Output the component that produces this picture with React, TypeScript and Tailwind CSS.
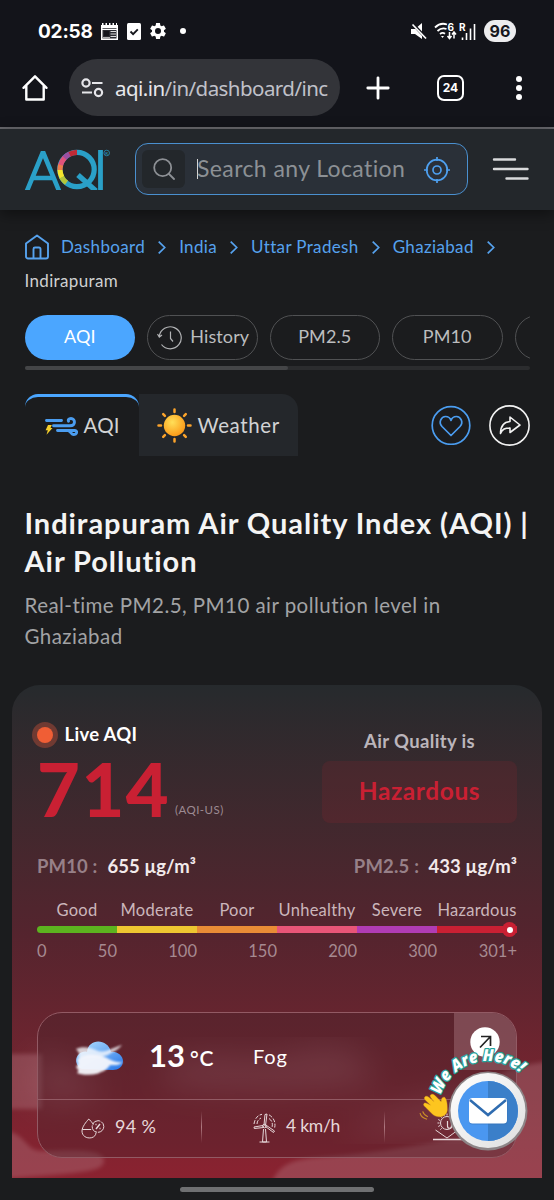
import { ReactNode } from "react";

const crumbs = ["Dashboard", "India", "Uttar Pradesh", "Ghaziabad"];

const levels = [
  { name: "Good", color: "bg-[#5cb31f]", mark: "50" },
  { name: "Moderate", color: "bg-[#edc631]", mark: "100" },
  { name: "Poor", color: "bg-[#e98c36]", mark: "150" },
  { name: "Unhealthy", color: "bg-[#e85577]", mark: "200" },
  { name: "Severe", color: "bg-[#b03cb4]", mark: "300" },
  { name: "Hazardous", color: "bg-[#c92033]", mark: "301+" },
];

function StatusBar() {
  return (
    <div className="flex h-[59px] items-center pt-[3px] pr-[38px] pl-[38px] text-white">
      <span className="w-[63px] font-[Inter] text-[19px] leading-none font-bold tracking-[-0.2px]">02:58</span>
      <svg className="h-[17px] w-[17px]" viewBox="0 0 17 17">
        <path d="M0 2h1V0h1.500v2h2V0H6v2h2V0h1.500v2h2V0H13v2h2V0h1v2h1v15H0z" fill="#fff" />
        <path d="M1.500 5h14v.8h-14zM1.500 7h14v8.500h-14z" fill="#2a2b31" />
        <path d="M3 8h5v5H3z" fill="#15161c" />
        <path d="M9.500 8.500H15M9.500 11H15M9.500 13.500H15M2 14.800h7" stroke="#ddd" strokeWidth="1.100" />
      </svg>
      <svg className="ml-[9px] h-[17px] w-[14px]" viewBox="0 0 14 17">
        <rect width="14" height="17" rx="1.500" fill="#fff" />
        <path d="M3.500 8.500l2.600 2.600 4.700-4.800" fill="none" stroke="#15161c" strokeWidth="1.900" />
      </svg>
      <svg className="ml-[7px] h-[20px] w-[20px]" viewBox="0 0 24 24" fill="#fff">
        <path d="M19.140 12.940c.04-.3.06-.61.06-.94 0-.32-.02-.64-.07-.94l2.030-1.580c.18-.14.23-.41.12-.61l-1.920-3.320c-.12-.22-.37-.29-.59-.22l-2.390.96c-.5-.38-1.030-.7-1.620-.94l-.36-2.540c-.04-.24-.24-.41-.48-.41h-3.840c-.24 0-.43.17-.47.41l-.36 2.540c-.59.24-1.130.57-1.620.94l-2.390-.96c-.22-.08-.47 0-.59.22L2.740 8.870c-.12.21-.08.47.12.61l2.030 1.580c-.05.3-.09.63-.09.94s.02.64.07.94l-2.030 1.580c-.18.14-.23.41-.12.61l1.920 3.320c.12.22.37.29.59.22l2.390-.96c.5.38 1.030.7 1.620.94l.36 2.540c.05.24.24.41.48.41h3.840c.24 0 .44-.17.47-.41l.36-2.540c.59-.24 1.130-.56 1.620-.94l2.390.96c.22.08.47 0 .59-.22l1.920-3.320c.12-.22.07-.47-.12-.61zM12 15.600a3.600 3.600 0 110-7.200 3.600 3.600 0 010 7.200z" />
      </svg>
      <span className="ml-[12px] h-[6px] w-[6px] rounded-full bg-white" />
      <svg className="ml-auto h-[17px] w-[16px]" viewBox="0 0 16 17">
        <path d="M0 6h4l7-6v16l-7-5H0z" fill="#fff" />
        <path d="M1 0l15 16" stroke="#15161c" strokeWidth="3" />
        <path d="M1.500 1.500L15 15.500" stroke="#fff" strokeWidth="1.700" />
      </svg>
      <svg className="ml-[7px] h-[18px] w-[24px] overflow-visible" viewBox="0 0 24 18" fill="none" stroke="#fff">
        <path d="M1 5.500C5 1.500 9 1 13 2.500M3.500 9C6.500 6.200 9.500 5.800 12.500 7M6 12c1.700-1.400 3.500-1.400 5-.2" strokeWidth="1.800" />
        <path d="M7 14h3l-1.500 2z" fill="#fff" stroke="none" />
        <path d="M15.500 10v6m-2-2l2 2.500 2-2.500M20 16.500v-6m-2 2l2-2.500 2 2.500" strokeWidth="1.500" />
        <text x="13.500" y="8.500" fill="#fff" stroke="none" fontSize="10" fontWeight="700" fontFamily="Inter">6</text>
      </svg>
      <svg className="ml-[2px] h-[17px] w-[16px] overflow-visible" viewBox="0 0 16 17">
        <text x="-1" y="8" fill="#fff" fontSize="10" fontWeight="700" fontFamily="Inter">R</text>
        <path d="M2.500 14.500V17M6.500 10v7M10.500 5.500V17M14.500 1v16" stroke="#fff" strokeWidth="1.600" />
      </svg>
      <span className="ml-[8px] flex h-[22px] w-[32px] items-center justify-center rounded-full bg-[#ececee] font-[Inter] text-[16px] font-bold text-[#15161c]">96</span>
    </div>
  );
}

function BrowserBar() {
  return (
    <div className="flex h-[68px] items-start">
      <svg className="mt-[15px] ml-[21px] h-[28px] w-[28px]" viewBox="0 0 28 28" fill="none" stroke="#fff" strokeWidth="2.400" strokeLinejoin="round">
        <path d="M2.500 13.800L14 2.300l11.500 11.500M5.300 11.500V25.500h17.400V11.500" strokeLinecap="round" />
      </svg>
      <div className="ml-[20px] flex h-[57px] w-[271px] items-center rounded-full bg-[#333439] pl-[12px]">
        <svg className="h-[20px] w-[23px] shrink-0" viewBox="0 0 23 20" fill="none" stroke="#e6e6ea" strokeWidth="2.200">
          <circle cx="5" cy="5" r="3.600" />
          <circle cx="17.500" cy="14.500" r="3.600" />
          <path d="M11 5h10.500M1 14.500h10" />
        </svg>
        <span className="ml-[11px] font-['Noto_Sans'] text-[20.500px] leading-[30px] tracking-[-0.550px] whitespace-nowrap text-[#c0c1c9]">
          <span className="text-[#e8e8ec]">aqi.in</span>/in/dashboard/inc
        </span>
      </div>
      <svg className="mt-[17px] ml-[26px] h-[24px] w-[24px]" viewBox="0 0 24 24" stroke="#fff" strokeWidth="2.800" strokeLinecap="round">
        <path d="M12 1.800v20.400M1.800 12h20.400" />
      </svg>
      <div className="mt-[16px] ml-[47px] flex h-[26px] w-[27px] items-center justify-center rounded-[7px] border-[2.500px] border-white font-[Inter] text-[12px] font-bold text-white">24</div>
      <div className="mt-[17px] ml-[52px] flex flex-col gap-[3px]">
        <i className="h-[6px] w-[6px] rounded-full bg-white" />
        <i className="h-[6px] w-[6px] rounded-full bg-white" />
        <i className="h-[6px] w-[6px] rounded-full bg-white" />
      </div>
    </div>
  );
}

function Logo() {
  return (
    <svg className="h-[41px] w-[86px]" viewBox="0 0 86 41" fill="none" strokeWidth="5.200">
      <g stroke="#2aa0c8">
        <path d="M2.500 43L19 3l16.500 40M9.500 29h19" strokeWidth="4.600" strokeLinejoin="bevel" />
        <path d="M76.500 1v40" strokeWidth="4.800" />
        <circle cx="53" cy="20.500" r="17.200" />
        <path d="M54 26l18 16" />
      </g>
      <path d="M45 5.500a17 17 0 018-2.200" stroke="#c02a35" />
      <path d="M40 9.500a17 17 0 015.500-4.300" stroke="#9b4fa0" />
      <path d="M36.500 16.500a17 17 0 014-7.500" stroke="#e0527a" />
      <path d="M36 21a17 17 0 01.7-5" stroke="#ef7b4a" />
      <path d="M38 28.500a17 17 0 01-2-7.500" stroke="#f5e52c" />
      <path d="M42.500 33.700a17 17 0 01-4.800-5.500" stroke="#b4c63a" />
      <circle cx="82.700" cy="4" r="2.800" stroke="#2aa0c8" strokeWidth=".7" />
      <text x="81.300" y="5.700" fontSize="4.500" fill="#2aa0c8" fontFamily="Lato">R</text>
    </svg>
  );
}

function Header() {
  return (
    <header className="flex h-[81px] items-start bg-[#23272b] pt-[14px] pr-[25px] pl-[24px] shadow-[0_4px_14px_rgba(0,0,0,0.45)]">
      <div className="mt-[6px]">
        <Logo />
      </div>
      <div className="ml-[25px] flex h-[52px] w-[333px] items-center rounded-[13px] border-[1.500px] border-[#4a90d0] bg-[#2a3038] pl-[6px]">
        <span className="flex h-[38px] w-[43px] items-center justify-center rounded-[6px] bg-[#23272b]">
          <svg className="h-[22px] w-[22px]" viewBox="0 0 22 22" fill="none" stroke="#8d9095" strokeWidth="1.800" strokeLinecap="round">
            <circle cx="9.700" cy="9.700" r="8.500" />
            <path d="M16 16l5 5" />
          </svg>
        </span>
        <span className="ml-[12px] h-[20px] w-px bg-[#d5d5d5]" />
        <span className="mb-[2px] ml-[-1px] w-[227px] text-[23px] tracking-[0.4px] whitespace-nowrap text-[#8c9095]">Search any Location</span>
        <svg className="mt-[1px] h-[26px] w-[26px]" viewBox="0 0 26 26" fill="none" stroke="#4e9fee" strokeWidth="1.700">
          <circle cx="13" cy="13" r="10.300" />
          <circle cx="13" cy="13" r="4" />
          <path d="M13 0v4M13 22v4M0 13h4M22 13h4" />
        </svg>
      </div>
      <svg className="mt-[14px] ml-auto h-[24px] w-[37px]" viewBox="0 0 37 24" stroke="#d9dadc" strokeWidth="2.400" strokeLinecap="round">
        <path d="M2 2.500h21M2 12h33.500M14.500 21.500h21" />
      </svg>
    </header>
  );
}

function Breadcrumbs() {
  return (
    <nav className="flex h-[68px] flex-wrap items-center text-[17px] leading-[34px] tracking-[0.350px] text-[#56a2ee]">
      <svg className="mr-[12.500px] h-[26px] w-[24px]" viewBox="0 0 24 26" fill="none" stroke="#56a2ee" strokeWidth="1.900" strokeLinejoin="round">
        <path d="M1 9.500L12 1.500l11 8V22.500a2 2 0 01-2 2H3a2 2 0 01-2-2zM8.500 24.500V15a1.500 1.500 0 011.500-1.500h4a1.500 1.500 0 011.500 1.500v9.500" />
      </svg>
      {crumbs.map((c) => (
        <span key={c} className="flex h-[34px] items-center">
          {c}
          <svg className="mr-[13px] ml-[13px] h-[13px] w-[8px]" viewBox="0 0 8 13" fill="none" stroke="#56a2ee" strokeWidth="1.700">
            <path d="M.7.7l6 5.800-6 5.800" />
          </svg>
        </span>
      ))}
      <span className="w-full text-[#cfd0d1]">Indirapuram</span>
    </nav>
  );
}

function Pill({ active, children }: { active?: boolean; children?: ReactNode }) {
  return (
    <div className={`flex h-[45px] w-[110.500px] shrink-0 items-center justify-center rounded-full pb-[2px] text-[18px] tracking-[0.1px] ${active ? "bg-[#4ba6ff] text-white" : "border border-[#505153] text-[#bcbdbf]"}`}>
      {children}
    </div>
  );
}

function Filters() {
  return (
    <div className="mt-[17px]">
      <div className="flex gap-[12px] overflow-hidden">
        <Pill active>AQI</Pill>
        <Pill>
          <svg className="mt-[2px] mr-[8px] ml-[2px] h-[24px] w-[25px]" viewBox="0 0 25 24" fill="none" stroke="#b2b3b5" strokeWidth="1.200">
            <path d="M2.300 10.500A11 11 0 1 1 4.500 18.500M.5 8l1.800 3L5 9M13.500 5.500v7l2.500 3" />
          </svg>
          History
        </Pill>
        <Pill>PM2.5</Pill>
        <Pill>PM10</Pill>
        <Pill />
      </div>
      <div className="mt-[6px] h-[4px] rounded-full bg-[#2b2c2e]">
        <div className="h-[4px] w-[263px] rounded-full bg-[#444547]" />
      </div>
    </div>
  );
}

function Tabs() {
  return (
    <div className="mt-[24px] flex h-[62px] text-[20.500px] text-[#d2d3d5]">
      <div className="flex w-[114px] items-center rounded-t-[13px] border-t-[3px] border-[#4ba6ff] pl-[20px]">
        <svg className="mr-[6px] h-[19px] w-[33px]" viewBox="0 0 33 19" fill="none" stroke="#4b9df0" strokeWidth="2.900" strokeLinecap="round">
          <path d="M1.500 3.500h15M8.500 8.800H25c6 0 5.500-7.300 1-7.300-2.500 0-3 1.500-2.500 2.700M12.500 13.500h17c3.500 0 2.500 4-1 4-2 0-2-2-4.500-3.500" />
          <path d="M3 8h3.800L5.500 11h2L1.500 17.800l1.300-4.600H.6z" fill="#f6cf2b" stroke="none" />
        </svg>
        <span className="mb-[2px] tracking-[0.2px]">AQI</span>
      </div>
      <div className="flex w-[159px] items-center rounded-tr-[16px] bg-[#24272b] pl-[18px]">
        <svg className="mt-[1px] mr-[6px] h-[35px] w-[35px]" viewBox="0 0 35 35">
          <defs>
            <radialGradient id="sun" cx="40%" cy="35%" r="65%">
              <stop offset="0" stopColor="#ffdf58" />
              <stop offset="1" stopColor="#fb9b19" />
            </radialGradient>
          </defs>
          <circle cx="17.500" cy="17.500" r="10.700" fill="url(#sun)" />
          <path d="M17.500 1.500v2.500M17.500 31v2.500M1.500 17.500H4M31 17.500h2.500M6.200 6.200l1.700 1.700M27.100 27.100l1.700 1.700M28.800 6.200l-1.700 1.700M6.200 28.800l1.700-1.700" stroke="#fba32b" strokeWidth="2.500" strokeLinecap="round" />
        </svg>
        <span className="tracking-[0.6px]">Weather</span>
      </div>
      <svg className="mt-[11px] ml-auto h-[40px] w-[40px]" viewBox="0 0 40 40" fill="none" stroke="#4b9df0" strokeWidth="1.700">
        <circle cx="20" cy="20.500" r="18.800" />
        <path d="M20 30.500L11 21.500c-4-4.500-.5-10 3.500-10 2.700 0 4.700 1.500 5.500 4 .8-2.500 2.800-4 5.500-4 4 0 7.500 5.500 3.500 10z" strokeLinejoin="round" />
      </svg>
      <svg className="mt-[11px] ml-[18px] h-[41px] w-[41px]" viewBox="0 0 41 41" fill="none" stroke="#f2f2f2" strokeWidth="1.600">
        <circle cx="20.500" cy="20.500" r="19.600" />
        <path d="M11.500 28.500c0-8 3.500-11.500 9.500-12v-4.500l10 8-10 7.500v-4.500c-5 0-7.500 1-9.500 5.500z" strokeLinejoin="round" />
      </svg>
    </div>
  );
}

function Clouds() {
  return (
    <svg className="absolute inset-0 h-full w-full" viewBox="0 0 530 493" preserveAspectRatio="none">
      <defs>
        <filter id="haze"><feGaussianBlur stdDeviation="2" /></filter>
        <filter id="wide"><feGaussianBlur stdDeviation="16" /></filter>
      </defs>
      <g fill="#b47882" opacity=".38" filter="url(#haze)">
        <path d="M-10 369H30V424H-10z" />
        <path d="M-10 446c24 0 22 20 40 20 25 0 62-4 62 10 0 12-30 12-102 18z" />
        <path d="M260 498c6-18 20-24 50-26 60-4 110-14 170-26V394q22-14 60-18v122z" />
      </g>
      <g fill="#b47882" opacity=".34" filter="url(#wide)">
        <path d="M25 370c30 0 40 20 60 28 20 20-30 20-60 20zM150 385c40-30 80 0 140-20 50-12 70 10 70 34-40 6-150 12-210 0zM330 450c40-30 80-30 130-46v40z" />
      </g>
    </svg>
  );
}

function WeatherBox() {
  return (
    <div className="relative mt-[48px] h-[146px] overflow-hidden rounded-[25px] border border-[#925a64] bg-[#46212b]/35 text-[#f1e8e9]">
      <div className="flex h-[87px] items-center border-b border-[#925a64] pl-[36px]">
        <svg className="mt-[4px] h-[38px] w-[52px]" viewBox="0 0 52 38">
          <defs>
            <linearGradient id="sky" x1="0" y1="0" x2="1" y2="1">
              <stop offset="0" stopColor="#b7e2ff" />
              <stop offset="1" stopColor="#2475e8" />
            </linearGradient>
            <filter id="soft"><feGaussianBlur stdDeviation="1.200" /></filter>
          </defs>
          <path d="M8 30a9 9 0 01-3-15c2-2 6-3 8-2C14-1 34-1 37 13c6-1 12 4 12 9 0 6-5 9-10 9z" fill="url(#sky)" />
          <g filter="url(#soft)" fill="#f6f7fc">
            <path d="M2 10c6-3 14-2 22 2 8 2 16-4 24-6-5 6-10 7-14 10-8 3-14 2-20 2-4 0-8 2-10 0 3-3 0-5-2-8z" opacity=".8" />
            <path d="M3 21c8-7 20-6 30-2 4 2 8 5 16 4-4 4-9 3-13 3-2 3-5 6-9 7-4 3-18 4-24 1 3-3 0-4-1-6 3-3 3-4 1-7z" opacity=".95" />
          </g>
        </svg>
        <span className="mb-[2px] ml-[23px] w-[41px] text-[31px] leading-none font-bold text-white">13</span>
        <span className="mt-[3px] w-[63px] text-[21px] font-semibold tracking-[0.8px] text-white">°C</span>
        <span className="mb-[1px] text-[20px] tracking-[0.9px] text-white">Fog</span>
        <div className="ml-auto flex h-[57px] w-[62px] items-center justify-center self-start bg-[#a87880]/45">
          <svg className="h-[30px] w-[30px]" viewBox="0 0 30 30">
            <circle cx="15" cy="15" r="14.700" fill="#fff" />
            <path d="M10 20.500L20 10M11 9.500h9.500V19" fill="none" stroke="#222" strokeWidth="1.700" />
          </svg>
        </div>
      </div>
      <div className="flex h-[54px] items-center text-[18px] text-[#e6d7d9]">
        <svg className="mt-[3px] ml-[43px] h-[21px] w-[24px]" viewBox="0 0 24 21" fill="none" stroke="#e6d7d9" strokeWidth="1">
          <path d="M12.500 6.500C11 4.500 9 2 7.800 1 5 4 1 9 1 13c0 9 14 9 14 1.500M1.200 11.500h9" />
          <circle cx="17" cy="8.500" r="5.800" strokeDasharray="9 1" />
          <path d="M15 11l4-5M14.500 6.500h1M18.500 10.500h1" strokeWidth="1.500" />
        </svg>
        <span className="mb-[1px] ml-[10px] w-[86px] tracking-[0.3px]">94 %</span>
        <span className="h-[32px] w-px bg-gradient-to-b from-transparent via-[#b07a82] to-transparent" />
        <svg className="mt-[2px] ml-[51px] h-[30px] w-[23px]" viewBox="0 0 23 30" fill="none" stroke="#e6d7d9" strokeWidth="1">
          <path d="M10.500 16l-1 13h4l-1-13M6.500 29h10M11 12l1-10.500 2-.5-1.500 11.500zM10 12.500L1 14l.3 1.500 9.200-1zM12.500 13.500l8 6 1-1.500-8-5.500z" />
          <circle cx="11.500" cy="13" r="1.800" />
          <path d="M1 11C2 5 5 2 9 1.300M4 11c0-3 2-5 4-6M16 1.800c5 3 7 8 5.500 13.500M16 5.500c3 2 4 5 3 9" strokeDasharray="4 1.500" />
        </svg>
        <span className="mb-[1px] ml-[10px] w-[98px] text-[17.500px] tracking-[-0.250px]">4 km/h</span>
        <span className="h-[32px] w-px bg-gradient-to-b from-transparent via-[#b07a82] to-transparent" />
        <svg className="ml-[48px] h-[30px] w-[32px] shrink-0" viewBox="0 0 32 30" fill="none" stroke="#e6d7d9" strokeWidth="1">
          <circle cx="14" cy="11" r="6.500" />
          <path d="M14 1.500v2M7.300 4.300l1.400 1.400M4.500 11h2M7.300 17.700l1.400-1.400M5.300 7.500l1.700 1M5.300 14.500l1.700-1M10.500 2l.8 1.800M20.700 4.300l-1.400 1.400M2.500 18L14 26l11-8" />
          <path d="M0 27.500h32" strokeWidth="1.600" />
          <path d="M14.500 9v5c0 3 4 3 4 0V9" strokeWidth="1.200" />
        </svg>
      </div>
    </div>
  );
}

function AqiCard() {
  return (
    <section className="relative mx-[12px] mt-[33px] h-[493px] shrink-0 overflow-hidden rounded-t-[28px] bg-gradient-to-b from-[#262a2d] via-[#54242e] via-[50%] to-[#8a2230]">
      <Clouds />
      <div className="relative px-[25px] pt-[37px]">
        <div className="flex h-[101px] justify-between">
          <div>
            <div className="-ml-[5px] flex h-[26px] items-center text-[18.500px] font-bold tracking-[0.3px] text-white">
              <span className="mr-[6.500px] flex h-[26px] w-[26px] items-center justify-center rounded-full bg-[#703a32]">
                <i className="h-[16px] w-[16px] rounded-full bg-[#f05e35]" />
              </span>
              Live AQI
            </div>
            <div className="-mt-px flex items-end text-[#c92033]">
              <span className="w-[138px] text-[74px] leading-[84px] font-black tracking-[1.500px]">714</span>
              <span className="mb-[16px] text-[11.500px] leading-none tracking-[0.450px] text-[#9d8b93]">(AQI-US)</span>
            </div>
          </div>
          <div className="w-[195px] pt-[6px] text-center">
            <div className="text-[18.500px] leading-[26px] font-bold tracking-[0.350px] text-[#bbb5bb]">Air Quality is</div>
            <div className="mt-[7px] flex h-[62px] items-center justify-center rounded-[8px] bg-[#c92033]/12 pb-[2px] text-[24.500px] font-bold tracking-[0.6px] text-[#c92033]">Hazardous</div>
          </div>
        </div>
        <div className="mt-[31px] flex h-[26px] items-center justify-between text-[18.500px] font-bold whitespace-pre text-[#f3eaeb]">
          <span><span className="mr-[1px] tracking-[0.1px] text-[#978088]">PM10 :  </span>655 µg/m³</span>
          <span><span className="tracking-[0.2px] text-[#978088]">PM2.5 :  </span>433 µg/m³</span>
        </div>
        <div className="mt-[17px] grid grid-cols-6 text-[16.500px] leading-[26px] tracking-[0.250px] whitespace-nowrap text-[#cbb6bb]">
          {levels.map((l) => <span key={l.name} className="flex justify-center">{l.name}</span>)}
        </div>
        <div className="relative mt-[3px] flex h-[7px]">
          {levels.map((l) => <span key={l.name} className={`flex-1 first:rounded-l-full ${l.color}`} />)}
          <span className="absolute top-[-4px] right-0 flex h-[15px] w-[15px] items-center justify-center rounded-full bg-[#c92033]">
            <i className="h-[6px] w-[6px] rounded-full bg-white" />
          </span>
        </div>
        <div className="relative mt-[5px] grid grid-cols-6 text-right text-[16.500px] leading-[26px] text-[#a68a91]">
          <span className="absolute left-0">0</span>
          {levels.map((l) => <span key={l.mark}>{l.mark}</span>)}
        </div>
        <WeatherBox />
      </div>
    </section>
  );
}

function ChatBadge() {
  return (
    <svg className="absolute top-[1035px] left-[412px] h-[122px] w-[124px] overflow-visible" viewBox="0 0 124 122">
      <defs>
        <path id="arc" d="M28.500 60A50 50 0 01113 42.500" />
        <linearGradient id="ring" x1="0" y1="0" x2="1" y2="1">
          <stop offset="0" stopColor="#fff" />
          <stop offset="1" stopColor="#dedede" />
        </linearGradient>
      </defs>
      <circle cx="76" cy="76" r="39.500" fill="#8d8587" />
      <circle cx="76" cy="75.500" r="37.500" fill="url(#ring)" />
      <circle cx="76" cy="76" r="30" fill="#4a97f0" />
      <path d="M76 46a30 30 0 010 60z" fill="#3b7fc9" />
      <rect x="57" y="63.500" width="38.500" height="26" rx="3.500" fill="#2f6cb0" opacity=".5" />
      <rect x="57" y="63" width="38" height="25.500" rx="3.500" fill="#fff" />
      <path d="M58 65l18 15 18-15" fill="none" stroke="#2f6cb0" strokeWidth="2.500" />
      <text fontFamily="Open Sans" fontSize="16.500" fontStyle="italic" fontWeight="800" fill="#fff" stroke="#25a39c" strokeWidth="2.500" paintOrder="stroke" strokeLinejoin="round">
        <textPath href="#arc" textLength="97" lengthAdjust="spacingAndGlyphs">We Are Here!</textPath>
      </text>
      <g transform="translate(23 72) scale(.88)">
        <path d="M-11 0c-4-3-1-6 2-4l4 2-6-6c-3-3 1-6 4-3l6 5-4-5c-2-3 2-5 5-2l7 7c0-3 1-6 4-5 3 3 3 10 3 14 0 8-11 11-17 5z" fill="#fdc51f" stroke="#e5a516" strokeWidth=".4" />
        <path d="M-14 5c1 3 3 5 6 6M-17 7c1 4 4 6 8 7" fill="none" stroke="#c98c28" strokeWidth="1.300" />
      </g>
    </svg>
  );
}

export default function App() {
  return (
    <div className="relative flex h-[1200px] w-[554px] flex-col overflow-hidden bg-[#1b1c1e] font-[Lato,sans-serif]">
      <div className="h-[129px] shrink-0 border-b-2 border-[#69696e] bg-[#13141a]">
        <StatusBar />
        <BrowserBar />
      </div>
      <Header />
      <main className="px-[24.500px] pt-[20px]">
        <Breadcrumbs />
        <Filters />
        <Tabs />
        <h1 className="mt-[48px] text-[29px] leading-[38px] font-bold tracking-[0.950px] whitespace-nowrap text-[#f4f4f4]">
          Indirapuram Air Quality Index (AQI) |<br />Air Pollution
        </h1>
        <p className="mt-[10px] text-[20.500px] leading-[31px] tracking-[0.450px] text-[#a2a3a5]">
          Real-time PM2.5, PM10 air pollution level in<br />Ghaziabad
        </p>
      </main>
      <AqiCard />
      <ChatBadge />
      <div className="mx-auto mt-[9px] h-[5px] w-[194px] shrink-0 rounded-full bg-[#6f7072]" />
    </div>
  );
}
